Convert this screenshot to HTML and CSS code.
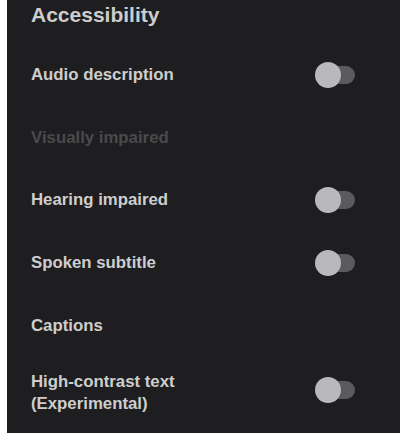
FILE: index.html
```html
<!DOCTYPE html>
<html>
<head>
<meta charset="utf-8">
<link rel="stylesheet" href="styles.css">
</head>
<body>
<div class="panel">
  <div class="title">Accessibility</div>
  <div class="list">
    <div class="row"><span class="label">Audio description</span><span class="toggle"><span class="knob"></span></span></div>
    <div class="row"><span class="label disabled">Visually impaired</span></div>
    <div class="row"><span class="label">Hearing impaired</span><span class="toggle"><span class="knob"></span></span></div>
    <div class="row"><span class="label">Spoken subtitle</span><span class="toggle"><span class="knob"></span></span></div>
    <div class="row"><span class="label">Captions</span></div>
    <div class="row last"><span class="label two">High-contrast text<br>(Experimental)</span><span class="toggle"><span class="knob"></span></span></div>
  </div>
</div>
</body>
</html>
```
FILE: styles.css
```css
html, body {
  margin: 0;
  padding: 0;
  background: #ffffff;
  height: 433px;
  overflow: hidden;
}
.panel {
  margin-left: 7px;
  height: 433px;
  background: #1e1e20;
  font-family: "Liberation Sans", Arial, sans-serif;
  font-weight: bold;
  color: #cecece;
  padding-left: 24px;
  padding-right: 45px;
  box-sizing: border-box;
}
.title {
  font-size: 21px;
  line-height: 30px;
  color: #cdcdcd;
}
.list {
  margin-top: 13.5px;
}
.row {
  height: 62.75px;
  display: flex;
  align-items: center;
  justify-content: space-between;
}
.label {
  font-size: 16.8px;
  line-height: 22px;
}
.label.disabled {
  color: #4a4a4c;
}
.row.last {
  align-items: flex-start;
  padding-top: 14px;
  box-sizing: border-box;
}
.row.last .toggle {
  margin-top: 10px;
}
.toggle {
  position: relative;
  width: 36px;
  height: 18px;
  border-radius: 9px;
  background: #5b5b5d;
  flex: none;
}
.knob {
  position: absolute;
  left: -4px;
  top: -4px;
  width: 26px;
  height: 26px;
  border-radius: 50%;
  background: #b9b9bb;
}
```
